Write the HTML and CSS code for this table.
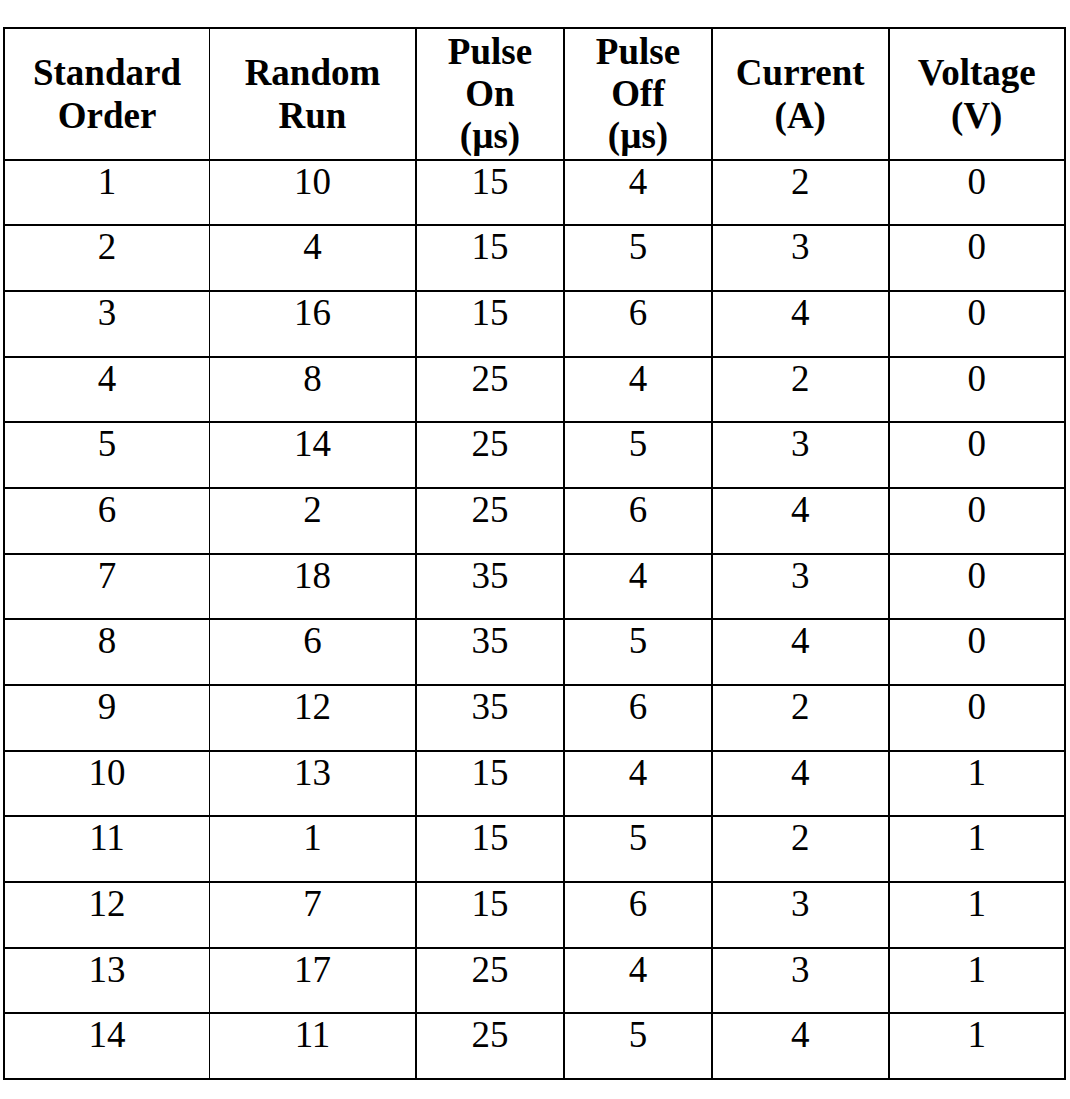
FILE: index.html
```html
<!DOCTYPE html>
<html lang="en">
<head>
<meta charset="utf-8">
<title>Design table</title>
<link rel="stylesheet" href="styles.css">
</head>
<body>
<div class="page">
<table class="doe">
  <colgroup>
    <col class="c1"><col class="c2"><col class="c3"><col class="c4"><col class="c5"><col class="c6">
  </colgroup>
  <thead>
    <tr>
      <th class="two first">Standard<br>Order</th>
      <th class="two second">Random<br>Run</th>
      <th class="three">Pulse<br>On<br>(µs)</th>
      <th class="three">Pulse<br>Off<br>(µs)</th>
      <th class="two">Current<br>(A)</th>
      <th class="two">Voltage<br>(V)</th>
    </tr>
  </thead>
  <tbody>
    <tr><td class="first">1</td><td class="second">10</td><td>15</td><td>4</td><td>2</td><td>0</td></tr>
    <tr><td class="first">2</td><td class="second">4</td><td>15</td><td>5</td><td>3</td><td>0</td></tr>
    <tr><td class="first">3</td><td class="second">16</td><td>15</td><td>6</td><td>4</td><td>0</td></tr>
    <tr><td class="first">4</td><td class="second">8</td><td>25</td><td>4</td><td>2</td><td>0</td></tr>
    <tr><td class="first">5</td><td class="second">14</td><td>25</td><td>5</td><td>3</td><td>0</td></tr>
    <tr><td class="first">6</td><td class="second">2</td><td>25</td><td>6</td><td>4</td><td>0</td></tr>
    <tr><td class="first">7</td><td class="second">18</td><td>35</td><td>4</td><td>3</td><td>0</td></tr>
    <tr><td class="first">8</td><td class="second">6</td><td>35</td><td>5</td><td>4</td><td>0</td></tr>
    <tr><td class="first">9</td><td class="second">12</td><td>35</td><td>6</td><td>2</td><td>0</td></tr>
    <tr><td class="first">10</td><td class="second">13</td><td>15</td><td>4</td><td>4</td><td>1</td></tr>
    <tr><td class="first">11</td><td class="second">1</td><td>15</td><td>5</td><td>2</td><td>1</td></tr>
    <tr><td class="first">12</td><td class="second">7</td><td>15</td><td>6</td><td>3</td><td>1</td></tr>
    <tr><td class="first">13</td><td class="second">17</td><td>25</td><td>4</td><td>3</td><td>1</td></tr>
    <tr><td class="first">14</td><td class="second">11</td><td>25</td><td>5</td><td>4</td><td>1</td></tr>
  </tbody>
</table>
</div>
</body>
</html>
```

FILE: styles.css
```css
html, body {
  margin: 0;
  padding: 0;
  background: #ffffff;
}

.page {
  padding: 27px 0 0 3px;
}

.doe {
  border-collapse: collapse;
  table-layout: fixed;
  width: 1063px;
  font-family: "Liberation Serif", "Times New Roman", serif;
  color: #000000;
}

.c1 { width: 205.5px; }
.c2 { width: 206.5px; }
.c3 { width: 148px; }
.c4 { width: 148px; }
.c5 { width: 176.5px; }
.c6 { width: 176.5px; }

.doe th,
.doe td {
  border: 2px solid #000000;
  padding: 0;
  text-align: center;
}

.doe th {
  font-weight: bold;
  font-size: 37px;
  height: 129.5px;
  vertical-align: middle;
}

.doe th.two {
  line-height: 43px;
}

.doe th.three {
  line-height: 42px;
}

.doe td {
  font-size: 37px;
  font-weight: normal;
  line-height: 41px;
  height: 63.7px;
  vertical-align: top;
}

.doe .first {
  border-right-width: 1px;
}

.doe .second {
  border-left-width: 1px;
}
```
